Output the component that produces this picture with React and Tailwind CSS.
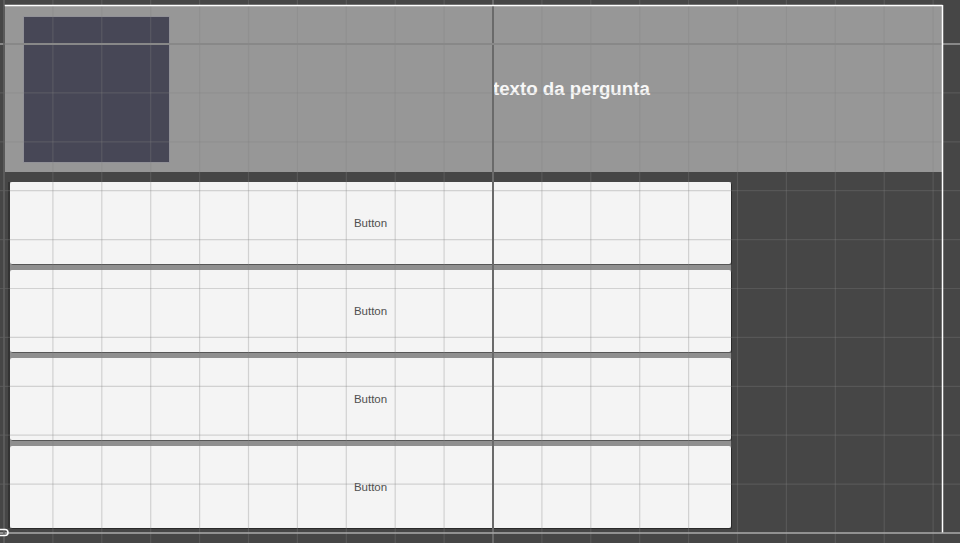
import React from 'react';

const STEP = 48.9;
const V_LINES = Array.from({ length: 20 }, (_, i) => 4 + STEP * i);
const H_LINES = Array.from({ length: 11 }, (_, i) => 44 + STEP * i);
const BUTTONS = ['Button', 'Button', 'Button', 'Button'];

/* Scene view grid, axis lines and canvas frame drawn over everything */
function SceneOverlay() {
  return (
    <svg
      className="absolute inset-0 pointer-events-none"
      width="960"
      height="543"
      xmlns="http://www.w3.org/2000/svg"
      aria-hidden="true"
    >
      {V_LINES.map((x, i) => (
        <line key={'v' + i} x1={x} y1="0" x2={x} y2="543" stroke="rgba(128,128,128,0.3)" strokeWidth="1.2" />
      ))}
      {H_LINES.map((y, i) => (
        <line key={'h' + i} x1="0" y1={y} x2="960" y2={y} stroke="rgba(128,128,128,0.3)" strokeWidth="1.2" />
      ))}
      {/* axis lines */}
      <line x1="493" y1="0" x2="493" y2="543" stroke="#6a6a6a" strokeWidth="2" />
      <line x1="0" y1="44" x2="960" y2="44" stroke="#888888" strokeWidth="2" />
      {/* canvas frame */}
      <line x1="4" y1="5.5" x2="942.5" y2="5.5" stroke="#ffffff" strokeWidth="1.5" />
      <line x1="942.5" y1="5" x2="942.5" y2="533" stroke="#ffffff" strokeWidth="1.5" />
      <line x1="0" y1="533" x2="960" y2="533" stroke="#a8a8a8" strokeWidth="1.5" />
      <line x1="4" y1="0" x2="4" y2="543" stroke="#5e5e5e" strokeWidth="1.5" />
      {/* rect handle, bottom left */}
      <path d="M0 529.5 H5 A3 3 0 0 1 5 535.5 H0" fill="none" stroke="#ffffff" strokeWidth="1.6" />
    </svg>
  );
}

export default function App() {
  return (
    <div className="relative w-[960px] h-[543px] overflow-hidden bg-[#464646] font-['Liberation_Sans',Arial,sans-serif] pt-[6px] pl-[5px]">
      {/* Question header */}
      <div className="flex items-center w-[937px] h-[166px] bg-[#979797]">
        <div className="ml-[18px] w-[147px] h-[147px] shrink-0 bg-[#474756] border border-[#b0b0b4]/70" />
        <span className="ml-[323px] text-[18.7px] font-bold leading-none text-[#f7f7f7]">
          texto da pergunta
        </span>
      </div>

      {/* Answer buttons */}
      <div className="mt-[10px] ml-[5px] w-[721px] flex flex-col gap-[6px] bg-[#8f8f8f] shadow-[-2px_0_0_#333333]">
        {BUTTONS.map((label, i) => (
          <div
            key={i}
            className="h-[82px] flex items-center justify-center pt-[2px] rounded-[2px] bg-[#f4f4f4] shadow-[1px_1px_0_rgba(0,0,0,0.4)]"
          >
            <span className="text-[11.5px] leading-none text-[#505050]">{label}</span>
          </div>
        ))}
      </div>

      <SceneOverlay />
    </div>
  );
}
